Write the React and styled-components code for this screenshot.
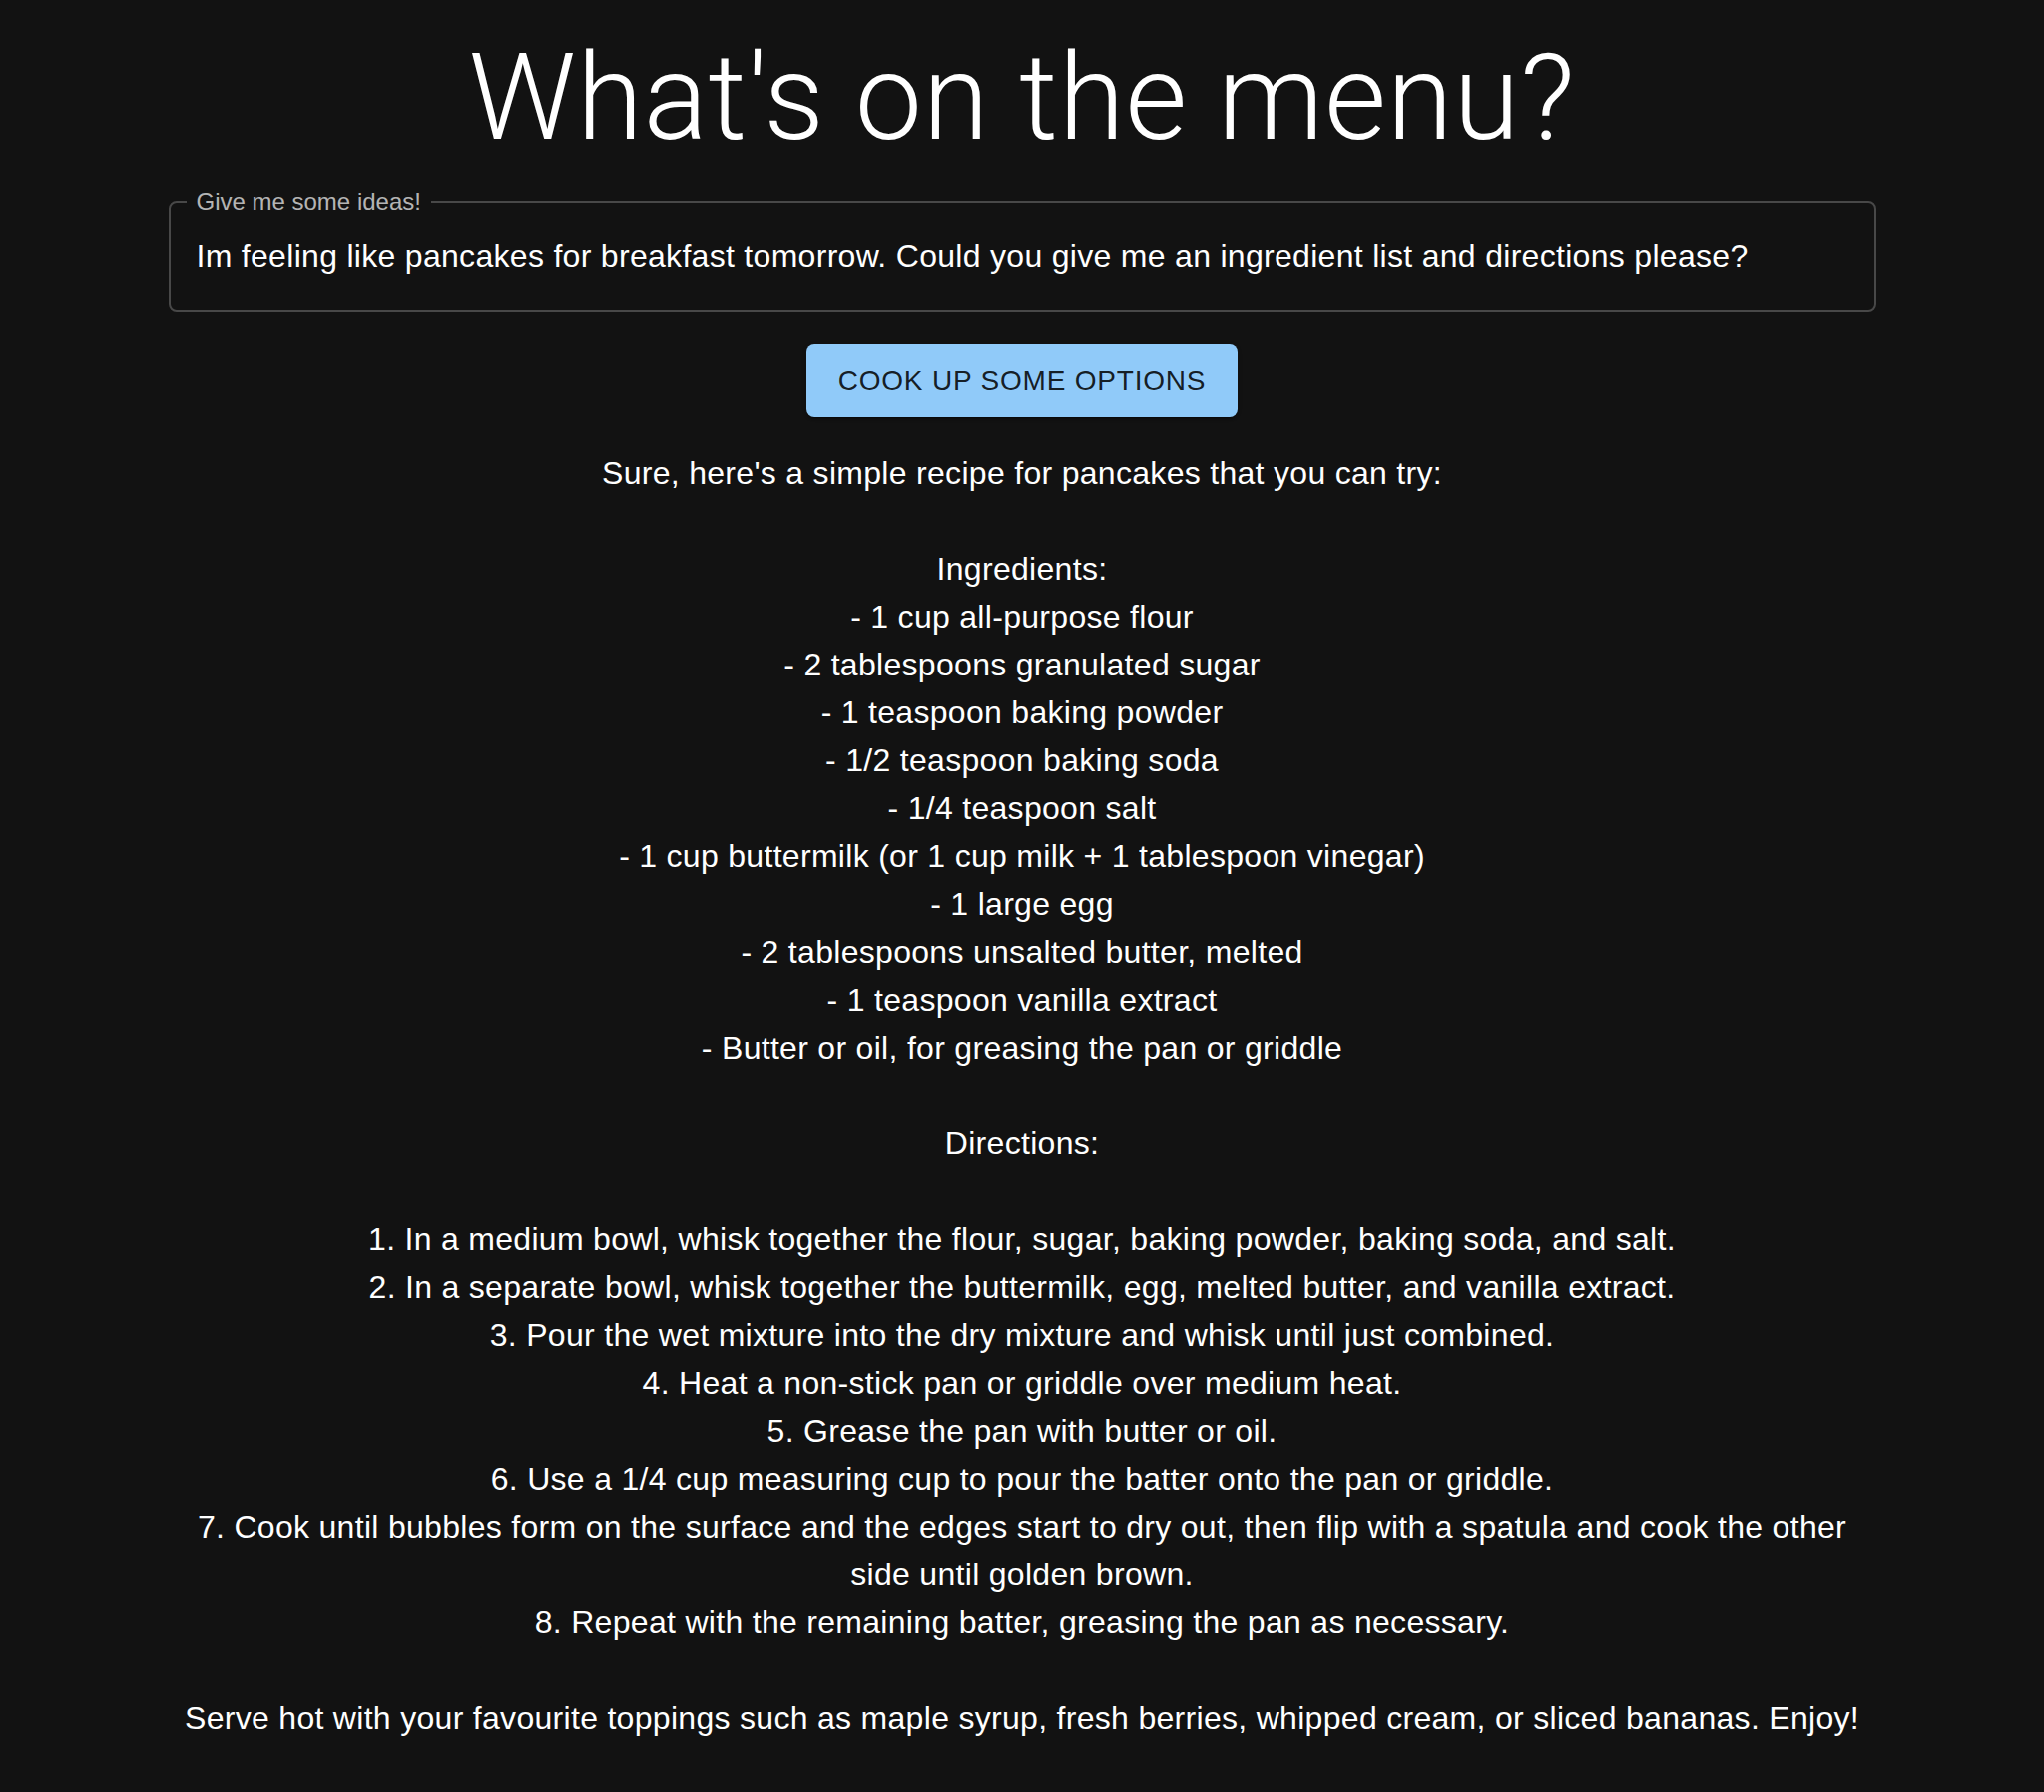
import React from 'react'
import styled, { createGlobalStyle } from 'styled-components'

const recipe = `Sure, here's a simple recipe for pancakes that you can try:

Ingredients:
- 1 cup all-purpose flour
- 2 tablespoons granulated sugar
- 1 teaspoon baking powder
- 1/2 teaspoon baking soda
- 1/4 teaspoon salt
- 1 cup buttermilk (or 1 cup milk + 1 tablespoon vinegar)
- 1 large egg
- 2 tablespoons unsalted butter, melted
- 1 teaspoon vanilla extract
- Butter or oil, for greasing the pan or griddle

Directions:

1. In a medium bowl, whisk together the flour, sugar, baking powder, baking soda, and salt.
2. In a separate bowl, whisk together the buttermilk, egg, melted butter, and vanilla extract.
3. Pour the wet mixture into the dry mixture and whisk until just combined.
4. Heat a non-stick pan or griddle over medium heat.
5. Grease the pan with butter or oil.
6. Use a 1/4 cup measuring cup to pour the batter onto the pan or griddle.
7. Cook until bubbles form on the surface and the edges start to dry out, then flip with a spatula and cook the other side until golden brown.
8. Repeat with the remaining batter, greasing the pan as necessary.

Serve hot with your favourite toppings such as maple syrup, fresh berries, whipped cream, or sliced bananas. Enjoy!`

const App = () => {
  return (
    <>
      <GlobalStyle />
      <Main>
        <Title>What's on the menu?</Title>
        <Field>
          <Label>Give me some ideas!</Label>
          <Input
            readOnly
            value="Im feeling like pancakes for breakfast tomorrow. Could you give me an ingredient list and directions please?"
          />
        </Field>
        <Actions>
          <Button>Cook up some options</Button>
        </Actions>
        <Response>{recipe}</Response>
      </Main>
    </>
  )
}

export default App

const GlobalStyle = createGlobalStyle`
  html, body {
    margin: 0;
    background: #121212;
    color: #fff;
    font-family: "Liberation Sans", Arial, sans-serif;
  }
`
const Main = styled.main`
  width: 1711px;
  margin: 0 auto;
  padding: 26px 0 40px;
  display: flex;
  flex-direction: column;
`
const Title = styled.h1`
  margin: 0 0 20px;
  font-family: Roboto, "Liberation Sans", sans-serif;
  font-weight: 300;
  font-size: 120px;
  line-height: 144px;
  letter-spacing: 0.7px;
  text-align: center;
`
const Field = styled.fieldset`
  margin: 0;
  padding: 0 26px 11px;
  border: 2px solid rgba(255, 255, 255, 0.23);
  border-radius: 8px;
  min-width: 0;
`
const Label = styled.legend`
  margin-left: -10px;
  padding: 0 10px;
  font-size: 24px;
  line-height: 24px;
  color: rgba(255, 255, 255, 0.7);
`
const Input = styled.input`
  display: block;
  width: 100%;
  height: 86px;
  padding: 0;
  border: none;
  outline: none;
  background: transparent;
  color: #fff;
  font-family: inherit;
  font-size: 32px;
  letter-spacing: 0.3px;
`
const Actions = styled.div`
  display: flex;
  justify-content: center;
  margin-top: 32px;
`
const Button = styled.button`
  padding: 12px 32px;
  border: none;
  border-radius: 8px;
  background: #90caf9;
  color: rgba(0, 0, 0, 0.87);
  font-family: inherit;
  font-size: 28px;
  line-height: 49px;
  letter-spacing: 0.8px;
  text-transform: uppercase;
  box-shadow: 0 3px 1px -2px rgba(0, 0, 0, 0.2), 0 2px 2px 0 rgba(0, 0, 0, 0.14), 0 1px 5px 0 rgba(0, 0, 0, 0.12);
  cursor: pointer;
`
const Response = styled.div`
  margin-top: 32px;
  white-space: pre-wrap;
  text-align: center;
  font-size: 32px;
  line-height: 48px;
  letter-spacing: 0.3px;
`
